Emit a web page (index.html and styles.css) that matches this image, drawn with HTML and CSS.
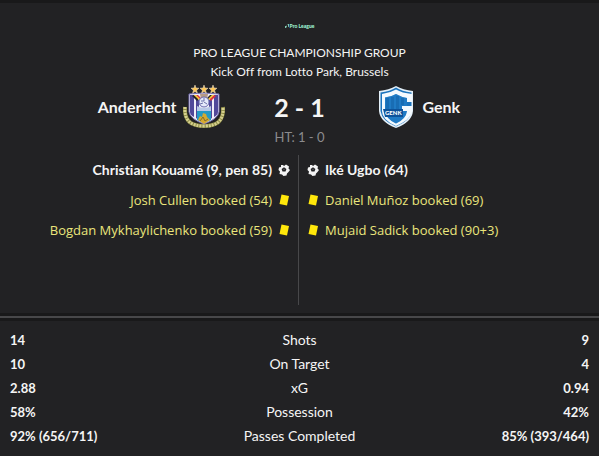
FILE: index.html
```html
<!DOCTYPE html>
<html lang="en">
<head>
<meta charset="utf-8">
<title>Anderlecht 2 - 1 Genk</title>
<link rel="stylesheet" href="styles.css">
</head>
<body>
<svg class="defs" aria-hidden="true">
  <symbol id="ball" viewBox="0 0 12 12">
    <path d="M3 1 5 1 6 2 8 .5 11 2.500 10.500 4.500 12 6 10.500 8 9 9.500 8.500 11.500 5.500 12 4 10.500 1.500 10 2 7.500 .5 6 1 3.500 3 3Z" fill="#f4f4f4"/>
    <path d="M6 3.300 8.400 5 7.500 7.600H4.500L3.600 5Z" fill="#222224"/>
    <path d="M5.500 4.800h1v1.200h-1Z" fill="#777779"/>
  </symbol>
  <symbol id="card" viewBox="0 0 12 12">
    <path d="M3.500 .5 11 2 9 11.500 1.500 10Z" fill="#ffe70a"/>
  </symbol>
</svg>
<main>
  <section class="panel match">
    <div class="league">
      <svg viewBox="0 0 5 5" aria-hidden="true"><path d="M0 5V3l2-1v2ZM2 1l3-1v3L4 4V1Z" fill="#9ff5d5"/></svg>
      <span>Pro League</span>
    </div>
    <h1>PRO LEAGUE CHAMPIONSHIP GROUP</h1>
    <p class="venue">Kick Off from Lotto Park, Brussels</p>
    <div class="scoreline">
      <div class="team home">
        <span>Anderlecht</span>
        <svg class="crest" viewBox="0 0 44 44" role="img" aria-label="Anderlecht crest">
          <path d="M3 22C2 36 9 41 22 41S42 36 41 22" fill="none" stroke="#8b8a45" stroke-width="4"/>
          <path d="M3 22C2 36 9 41 22 41S42 36 41 22" fill="none" stroke="#d6d08f" stroke-width="3" stroke-dasharray="2 1"/>
          <path d="M7 9Q22 7 37 9V27Q36 34 22 39Q8 34 7 27Z" fill="#f1eef8"/>
          <path d="M8 10h4v22q-4-2-4-5ZM14 15h3v20l-3-2ZM27 15h3v18l-3 2ZM32 10h4v17q0 3-4 5Z" fill="#51489a"/>
          <path d="M7 9Q22 7 37 9V27Q36 34 22 39Q8 34 7 27Z" fill="none" stroke="#746db1"/>
          <path d="M10 11l2-1 5 4-2 2Z" fill="#292325"/><path d="m12 10 2 0 4 3-1 2Z" fill="#ffd52e"/><path d="m14 10 2 0 3 3-1 1Z" fill="#dc3340"/>
          <path d="m34 11-2-1-5 4 2 2Z" fill="#dc3340"/><path d="m32 10-2 0-4 3 1 2Z" fill="#ffd52e"/><path d="m30 10-2 0-3 3 1 1Z" fill="#292325"/>
          <path d="M18 9h8l-1 5h-6Z" fill="#b69a86"/>
          <circle cx="22" cy="17" r="5" fill="#e6eafa" stroke="#6769ad"/>
          <path d="M19 16h3v-3M22 17l3 2M18 19l3-1" fill="none" stroke="#6b70a8"/>
          <path d="M15 21q7 4 14 0v5H15Z" fill="#b8c8e6"/>
          <path d="M15 26h14v9l-7 3-7-3Z" fill="#2599c4"/>
          <path d="m16 35 2-4 2 1 1-4 3 1 1 3 3 3-6 4Z" fill="#d6a92f"/>
          <path d="m18 36 3-4 2 4 3-2" fill="none" stroke="#806b2d"/>
          <g fill="#ffc855" stroke="#e8ded0" stroke-width=".5">
            <path id="star" d="m13 0 1 3 3 .2-2.400 2 .8 3-2.400-1.700-2.400 1.700.8-3-2.400-2 3-.2Z"/>
            <use href="#star" x="9"/><use href="#star" x="18"/>
          </g>
        </svg>
      </div>
      <div class="score">2 - 1</div>
      <div class="team away">
        <svg class="crest" viewBox="0 0 44 44" role="img" aria-label="Genk crest">
          <path d="M5 6Q15 5 22 1Q29 5 39 6V26Q38 37 22 43Q6 37 5 26Z" fill="#e4f0f9"/>
          <path d="M6.500 7.500Q16 6.500 22 2.500Q28 6.500 37.500 7.500V26Q36 36 22 41.500Q8 36 6.500 26Z" fill="#1c74bd"/>
          <path d="M8 9Q16 8 22 4.500Q28 8 38 9V17H33V13Q27 12 22 9Q17 12 11 12.500V26Q12 34 22 38.500Q32 34 33 26H28V21H38V27Q36 35 22 41Q8 35 8 26Z" fill="#f5fafe"/>
          <path d="M12 13h3v11h-3ZM17 12h3v12h-3ZM22 11h3v13h-3ZM27 13h3v7h-3Z" fill="#0f599f"/>
          <path d="M11 12.500Q17 12 22 9Q27 12 33 13V21H28V26H33Q32 34 22 38.500Q12 34 11 26Z" fill="#2686ce" opacity=".45"/>
          <path d="M9 24h20v8H11Z" fill="#0e539a"/>
          <text x="11" y="30" class="crest-name">GENK</text>
        </svg>
        <span>Genk</span>
      </div>
    </div>
    <p class="half">HT: 1 - 0</p>
    <div class="events">
      <ul class="home-events">
        <li class="goal">Christian Kouamé (9, pen 85)<svg aria-hidden="true"><use href="#ball"/></svg></li>
        <li>Josh Cullen booked (54)<svg aria-hidden="true"><use href="#card"/></svg></li>
        <li>Bogdan Mykhaylichenko booked (59)<svg aria-hidden="true"><use href="#card"/></svg></li>
      </ul>
      <ul class="away-events">
        <li class="goal"><svg aria-hidden="true"><use href="#ball"/></svg>Iké Ugbo (64)</li>
        <li><svg aria-hidden="true"><use href="#card"/></svg>Daniel Muñoz booked (69)</li>
        <li><svg aria-hidden="true"><use href="#card"/></svg>Mujaid Sadick booked (90+3)</li>
      </ul>
    </div>
  </section>
  <hr>
  <section class="panel stats">
    <table>
      <tr><td>14</td><th scope="row">Shots</th><td>9</td></tr>
      <tr><td>10</td><th scope="row">On Target</th><td>4</td></tr>
      <tr><td>2.88</td><th scope="row">xG</th><td>0.94</td></tr>
      <tr><td>58%</td><th scope="row">Possession</th><td>42%</td></tr>
      <tr><td>92% (656/711)</td><th scope="row">Passes Completed</th><td>85% (393/464)</td></tr>
    </table>
  </section>
</main>
</body>
</html>
```
FILE: styles.css
```css
* { box-sizing: border-box; }
body {
  margin: 0;
  padding-top: 3px;
  background: #19191a;
  color: #f5f5f5;
  font: 14px/24px Lato, "Open Sans", sans-serif;
  font-variant-ligatures: none;
}
h1, p, ul { margin: 0; padding: 0; }
.defs { display: none; }
.panel { background: #222224; }
.match { padding: 20px 0 8px; text-align: center; }
.league {
  display: flex;
  justify-content: center;
  align-items: center;
  gap: 1px;
  height: 6px;
  color: #9ff5d5;
  font-size: 5px;
  font-weight: 900;
  line-height: 6px;
}
.league svg { width: 4px; height: 4px; }
h1 {
  margin-top: 14px;
  font-size: 12px;
  font-weight: 400;
  line-height: 20px;
}
.venue { font-size: 12px; line-height: 18px; }
.scoreline {
  display: grid;
  grid-template-columns: 1fr 148px 1fr;
  align-items: center;
  height: 48px;
  margin-top: 2px;
}
.team {
  display: flex;
  align-items: center;
  gap: 5px;
  font-size: 16px;
  font-weight: 700;
}
.home { justify-content: flex-end; }
.crest { width: 44px; height: 44px; }
.crest-name { fill: #fff; font: 900 6px Lato, sans-serif; }
.score { font-size: 25px; font-weight: 700; line-height: 28px; }
.half { color: #8b8b8d; font-size: 13px; line-height: 12px; }
.events {
  display: grid;
  grid-template-columns: 1fr 1fr;
  margin: 12px 1px 0 0;
  min-height: 150px;
}
.events ul { list-style: none; }
.events li {
  display: flex;
  align-items: center;
  gap: 6px;
  height: 30px;
  color: #ebe67c;
  font-family: "Open Sans", Lato, sans-serif;
  font-size: 13px;
}
.events .goal {
  color: #f5f5f5;
  font-family: Lato, "Open Sans", sans-serif;
  font-size: 14px;
  font-weight: 700;
}
.events svg { width: 12px; height: 12px; }
.home-events { border-right: 1px solid #48484a; }
.home-events li { justify-content: flex-end; padding-right: 8px; }
.away-events li { padding-left: 8px; }
hr {
  height: 2px;
  margin: 3px 0;
  border: 0;
  background: #48484a;
}
.stats { padding: 7px 10px 8px; }
table { width: 100%; border-collapse: collapse; table-layout: fixed; }
td, th { height: 24px; padding: 0; }
td { font-size: 13px; font-weight: 700; }
td:last-child { text-align: right; }
th { font-weight: 400; text-align: center; }
```
